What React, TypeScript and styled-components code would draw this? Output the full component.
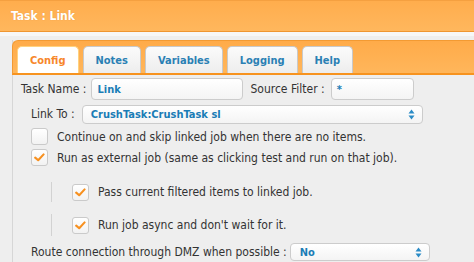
import React from "react";
import styled, { createGlobalStyle } from "styled-components";

const GlobalStyle = createGlobalStyle`
  html, body { margin: 0; padding: 0; }
  body {
    background: #eeeeee;
    font-family: "DejaVu Sans Condensed", "DejaVu Sans", sans-serif;
    font-size: 12px;
    color: #333333;
    overflow: hidden;
    width: 474px;
    height: 262px;
  }
`;

const Page = styled.div`
  width: 474px;
  height: 262px;
  overflow: hidden;
  display: flex;
  flex-direction: column;
`;

const Header = styled.div`
  height: 30px;
  flex-shrink: 0;
  display: flex;
  align-items: center;
  padding-left: 11px;
  background: linear-gradient(#ffad4d, #ffb75d);
  border-top: 1px solid #f5a040;
  border-bottom: 1px solid #ef9631;
  color: #ffffff;
  font-weight: bold;
  font-size: 12px;
  text-shadow: 0 0 1px rgba(180, 90, 0, 0.35);
`;

const Strip = styled.div`
  height: 4px;
  flex-shrink: 0;
  background: #f7f7f7;
  margin-bottom: 4px;
`;

const Panel = styled.div`
  flex: 1;
  min-height: 0;
  margin-left: 12px;
  border-left: 1px solid #d6d6d6;
`;

const TabBar = styled.div`
  height: 27px;
  padding: 5px 0 0 4px;
  margin-left: -1px;
  display: flex;
  align-items: flex-end;
  gap: 4px;
  background: linear-gradient(#ffab49, #ffb65b);
  border: 1px solid #f39a32;
  border-right: none;
  border-bottom: 2px solid #f7931f;
  border-radius: 6px 0 0 0;
`;

const Tab = styled.div<{ $active?: boolean }>`
  height: 27px;
  box-sizing: border-box;
  padding: 0 12px;
  display: flex;
  align-items: center;
  justify-content: center;
  font-weight: bold;
  font-size: 11px;
  border: 1px solid ${(p) => (p.$active ? "#ffd27f" : "#c9c9c9")};
  border-bottom: none;
  border-radius: 5px 5px 0 0;
  background: ${(p) => (p.$active ? "#ffffff" : "linear-gradient(#fbfbfb, #ededed)")};
  color: ${(p) => (p.$active ? "#f7872b" : "#2a80b4")};
`;

const Content = styled.div`
  display: flex;
  flex-direction: column;
`;

const Row = styled.div<{ $indent: number; $top: number; $h: number }>`
  display: flex;
  align-items: center;
  padding-left: ${(p) => p.$indent}px;
  margin-top: ${(p) => p.$top}px;
  height: ${(p) => p.$h}px;
`;

const Label = styled.span<{ $gap?: number; $lead?: number }>`
  white-space: nowrap;
  margin-left: ${(p) => p.$lead ?? 0}px;
  margin-right: ${(p) => p.$gap ?? 4}px;
`;

const Field = styled.div<{ $w: number; $h: number; $pad?: number }>`
  box-sizing: border-box;
  width: ${(p) => p.$w}px;
  height: ${(p) => p.$h}px;
  border: 1px solid #cccccc;
  border-radius: 4px;
  background: linear-gradient(#ffffff, #f4f4f4);
  display: flex;
  align-items: center;
  padding-left: ${(p) => p.$pad ?? 5}px;
  color: #1a7db6;
  font-weight: bold;
  font-size: 11px;
  position: relative;
  white-space: nowrap;
  flex-shrink: 0;
`;

const Arrows = styled.svg`
  position: absolute;
  right: 7px;
  top: 50%;
  margin-top: -5px;
`;

const Check = styled.div`
  box-sizing: border-box;
  width: 17px;
  height: 17px;
  border: 1px solid #cacaca;
  border-radius: 3px;
  background: linear-gradient(#ffffff, #f2f2f2);
  display: flex;
  align-items: center;
  justify-content: center;
  margin-right: 9px;
  flex-shrink: 0;
`;

const SubGroup = styled.div<{ $top: number; $h: number }>`
  margin-left: 38px;
  margin-top: ${(p) => p.$top}px;
  height: ${(p) => p.$h}px;
  border-left: 1px solid #d2d2d2;
  padding-left: 20px;
  display: flex;
  align-items: center;
`;

function SelectArrows() {
  return (
    <Arrows width="7" height="11" viewBox="0 0 7 11">
      <path d="M3.5 0.5 L6.5 4.5 L0.5 4.5 Z" fill="#2a8bc6" />
      <path d="M3.5 10.5 L6.5 6.5 L0.5 6.5 Z" fill="#2a8bc6" />
    </Arrows>
  );
}

function Tick({ on }: { on?: boolean }) {
  return (
    <Check>
      {on && (
        <svg width="11" height="9" viewBox="0 0 11 9">
          <path d="M1.2 4.6 L4.2 7.2 L9.6 1.4" fill="none" stroke="#f7901f" strokeWidth="2.1" strokeLinecap="round" strokeLinejoin="round" />
        </svg>
      )}
    </Check>
  );
}

export default function App() {
  return (
    <Page>
      <GlobalStyle />
      <Header>Task : Link</Header>
      <Strip />
      <Panel>
        <TabBar>
          <Tab $active>Config</Tab>
          <Tab>Notes</Tab>
          <Tab>Variables</Tab>
          <Tab>Logging</Tab>
          <Tab>Help</Tab>
        </TabBar>
        <Content>
          <Row $indent={8} $top={3} $h={22}>
            <Label $gap={5}>Task Name :</Label>
            <Field $w={152} $h={22}>Link</Field>
            <Label $lead={7} $gap={6}>Source Filter :</Label>
            <Field $w={83} $h={22}>*</Field>
          </Row>
          <Row $indent={18} $top={5} $h={18}>
            <Label $gap={7}>Link To :</Label>
            <Field $w={341} $h={19} $pad={8}>
              CrushTask:CrushTask sl
              <SelectArrows />
            </Field>
          </Row>
          <Row $indent={18} $top={5} $h={17}>
            <Tick />
            <span>Continue on and skip linked job when there are no items.</span>
          </Row>
          <Row $indent={18} $top={4} $h={17}>
            <Tick on />
            <span>Run as external job (same as clicking test and run on that job).</span>
          </Row>
          <SubGroup $top={16} $h={20}>
            <Tick on />
            <span>Pass current filtered items to linked job.</span>
          </SubGroup>
          <SubGroup $top={12} $h={22}>
            <Tick on />
            <span>Run job async and don't wait for it.</span>
          </SubGroup>
          <Row $indent={18} $top={7} $h={18}>
            <Label $gap={3}>Route connection through DMZ when possible :</Label>
            <Field $w={140} $h={18} $pad={9}>
              No
              <SelectArrows />
            </Field>
          </Row>
        </Content>
      </Panel>
    </Page>
  );
}
